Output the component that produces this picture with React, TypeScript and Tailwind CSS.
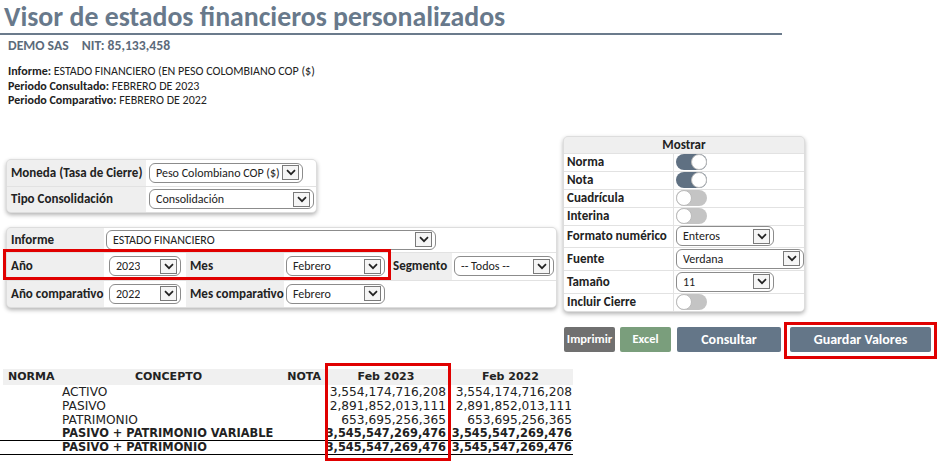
import React from "react";

function Chevron() {
  return (
    <svg width="10" height="7" viewBox="0 0 10 7" fill="none">
      <path d="M1 1.2 L5 5.2 L9 1.2" stroke="#222" strokeWidth="1.7" />
    </svg>
  );
}

function Select({ text, className = "" }: { text: string; className?: string }) {
  return (
    <div
      className={`flex h-[20px] items-center justify-between rounded-[6px] border border-[#8c8c8c] bg-white pl-[6px] pr-[3px] text-[12px] font-normal text-[#222] ${className}`}
    >
      <span className="truncate leading-none">{text}</span>
      <span className="flex h-[15px] w-[17px] shrink-0 items-center justify-center border border-[#7a7a7a] bg-[#f5f5f5]">
        <Chevron />
      </span>
    </div>
  );
}

function Toggle({ on }: { on?: boolean }) {
  return (
    <div
      className={`flex h-[16px] w-[31px] items-center rounded-full ${
        on ? "justify-end bg-[#5f7082]" : "justify-start bg-[#c4c4c4]"
      }`}
    >
      <div className="h-[16px] w-[16px] rounded-full border border-[#bbb] bg-white" />
    </div>
  );
}

const lbl = "flex items-center whitespace-nowrap bg-[#efefef] px-[4px] text-[13px] font-bold text-[#222]";
const cols = "grid grid-cols-[55px_227px_42px_124px_1fr]";

export default function App() {
  const rows = [
    { c: "ACTIVO", a: "3,554,174,716,208", b: "3,554,174,716,208" },
    { c: "PASIVO", a: "2,891,852,013,111", b: "2,891,852,013,111" },
    { c: "PATRIMONIO", a: "653,695,256,365", b: "653,695,256,365" },
  ];
  return (
    <div className="h-[466px] w-[941px] overflow-hidden bg-white font-['Calibri','Carlito','Lato',sans-serif] text-[#222]">
      {/* header */}
      <div className="w-[782px] border-b-2 border-[#6b7b8c] pl-[4px]">
        <h1 className="text-[27.8px] font-bold leading-[33px] text-[#68798b]">
          Visor de estados financieros personalizados
        </h1>
      </div>
      <div className="pl-[8px] pt-[2px] text-[13.7px] font-bold leading-[17px] text-[#5c6b7b]">
        DEMO SAS <span className="ml-[10px]">NIT: 85,133,458</span>
      </div>
      <div className="pl-[8px] pt-[10px] text-[12px] leading-[14.5px] text-[#222]">
        <div>
          <b>Informe:</b> ESTADO FINANCIERO (EN PESO COLOMBIANO COP ($)
        </div>
        <div>
          <b>Periodo Consultado:</b> FEBRERO DE 2023
        </div>
        <div>
          <b>Periodo Comparativo:</b> FEBRERO DE 2022
        </div>
      </div>

      {/* filters */}
      <div className="mt-[28px] flex items-start">
        <div className="ml-[6px] w-[557px] shrink-0 pt-[23px]">
          <div className="grid w-[311px] grid-cols-[139px_1fr] gap-y-px overflow-hidden rounded-[5px] border border-[#ddd] bg-[#e2e2e2] shadow-[0_2px_4px_rgba(0,0,0,0.3)]">
            <div className={`${lbl} h-[26px]`}>Moneda (Tasa de Cierre)</div>
            <div className="flex items-center bg-white pl-[3px]">
              <Select text="Peso Colombiano COP ($)" className="w-[154px]" />
            </div>
            <div className={`${lbl} h-[25px]`}>Tipo Consolidación</div>
            <div className="flex items-center bg-white pl-[3px]">
              <Select text="Consolidación" className="w-[165px]" />
            </div>
          </div>

          <div className="relative mt-[14px] w-[551px]">
            <div className="grid grid-cols-[97px_80px_100px_105px_63px_1fr] gap-y-px overflow-hidden rounded-[5px] border border-[#ddd] bg-[#e2e2e2] shadow-[0_2px_4px_rgba(0,0,0,0.3)]">
              <div className={`${lbl} h-[24px]`}>Informe</div>
              <div className="col-span-5 flex items-center bg-white pl-[2px]">
                <Select text="ESTADO FINANCIERO" className="w-[330px]" />
              </div>

              <div className={`${lbl} h-[27px]`}>Año</div>
              <div className="flex items-center bg-white pl-[5px]">
                <Select text="2023" className="w-[72px]" />
              </div>
              <div className={`${lbl} border-l-2 border-white px-[2px]`}>Mes</div>
              <div className="flex items-center bg-white pl-[2px]">
                <Select text="Febrero" className="w-[99px]" />
              </div>
              <div className={`${lbl} px-[2px]`}>Segmento</div>
              <div className="flex items-center bg-white pl-[2px]">
                <Select text="-- Todos --" className="w-[100px]" />
              </div>

              <div className={`${lbl} h-[26px]`}>Año comparativo</div>
              <div className="flex items-center bg-white pl-[5px]">
                <Select text="2022" className="w-[72px]" />
              </div>
              <div className={`${lbl} border-l-2 border-white px-[2px]`}>Mes comparativo</div>
              <div className="flex items-center bg-white pl-[2px]">
                <Select text="Febrero" className="w-[99px]" />
              </div>
              <div className="col-span-2 bg-white" />
            </div>
            <div className="pointer-events-none absolute left-[-3px] top-[22px] h-[31px] w-[388px] border-[3px] border-[#e00000]" />
          </div>
        </div>

        {/* Mostrar */}
        <div className="w-[242px] shrink-0">
          <div className="overflow-hidden rounded-[5px] border border-[#ddd] bg-[#e2e2e2] shadow-[0_2px_4px_rgba(0,0,0,0.3)]">
            <div className="flex h-[16px] items-center justify-center bg-[#efefef] text-[13px] font-bold">
              Mostrar
            </div>
            <div className="mt-px grid grid-cols-[109px_1fr] gap-px text-[13px] font-bold">
              <div className="flex h-[17px] items-center bg-white pl-[3px]">Norma</div>
              <div className="flex items-center bg-white pl-[2px]"><Toggle on /></div>
              <div className="flex h-[17px] items-center bg-white pl-[3px]">Nota</div>
              <div className="flex items-center bg-white pl-[2px]"><Toggle on /></div>
              <div className="flex h-[17px] items-center bg-white pl-[3px]">Cuadrícula</div>
              <div className="flex items-center bg-white pl-[2px]"><Toggle /></div>
              <div className="flex h-[17px] items-center bg-white pl-[3px]">Interina</div>
              <div className="flex items-center bg-white pl-[2px]"><Toggle /></div>
              <div className="flex h-[21px] items-center whitespace-nowrap bg-white pl-[3px]">Formato numérico</div>
              <div className="flex items-center bg-white pl-[2px]"><Select text="Enteros" className="w-[98px]" /></div>
              <div className="flex h-[22px] items-center bg-white pl-[3px]">Fuente</div>
              <div className="flex items-center bg-white pl-[2px]"><Select text="Verdana" className="w-[128px]" /></div>
              <div className="flex h-[22px] items-center bg-white pl-[3px]">Tamaño</div>
              <div className="flex items-center bg-white pl-[2px]"><Select text="11" className="w-[98px]" /></div>
              <div className="flex h-[17px] items-center bg-white pl-[3px]">Incluir Cierre</div>
              <div className="flex items-center bg-white pl-[2px]"><Toggle /></div>
            </div>
          </div>

          <div className="mt-[15px] flex w-[380px] items-center text-[12.5px] font-bold text-white">
            <div className="ml-px flex h-[25px] w-[51px] shrink-0 items-center justify-center rounded-[2px] bg-[#707070]">Imprimir</div>
            <div className="ml-[5px] flex h-[25px] w-[51px] shrink-0 items-center justify-center rounded-[2px] bg-[#7a9e7c]">Excel</div>
            <div className="ml-[6px] flex h-[25px] w-[104px] shrink-0 items-center justify-center rounded-[2px] bg-[#647688] text-[14px]">Consultar</div>
            <div className="relative ml-[9px] flex h-[25px] w-[141px] shrink-0 items-center justify-center whitespace-nowrap rounded-[2px] bg-[#647688] text-[14px]">
              Guardar Valores
              <div className="pointer-events-none absolute left-[-6px] top-[-5px] h-[37px] w-[153px] border-[3px] border-[#e00000]" />
            </div>
          </div>
        </div>
      </div>

      {/* table */}
      <div className="relative mt-[17px] w-[573px] font-['Verdana','DejaVu_Sans',sans-serif] text-[12.2px] leading-none">
        <div className="ml-[3px] grid h-[16px] grid-cols-[52px_227px_42px_124px_1fr] items-center bg-[#f0f0f0] text-[11px] font-bold">
          <div className="pl-[5px]">NORMA</div>
          <div className="text-center">CONCEPTO</div>
          <div className="pr-[3px] text-right">NOTA</div>
          <div className="text-center">Feb 2023</div>
          <div className="text-center">Feb 2022</div>
        </div>
        {rows.map((r) => (
          <div key={r.c} className={`${cols} h-[14px] items-end`}>
            <div />
            <div className="pl-[7px]">{r.c}</div>
            <div />
            <div className="pr-[2px] text-right">{r.a}</div>
            <div className="pr-[1px] text-right">{r.b}</div>
          </div>
        ))}
        <div className={`${cols} h-[14px] items-end border-b border-black text-[11.4px] font-bold`}>
          <div />
          <div className="whitespace-nowrap pl-[7px]">PASIVO + PATRIMONIO VARIABLE</div>
          <div />
          <div className="pr-[2px] text-right">3,545,547,269,476</div>
          <div className="pr-[1px] text-right">3,545,547,269,476</div>
        </div>
        <div className={`${cols} h-[14px] items-end border-b border-black text-[11.4px] font-bold`}>
          <div />
          <div className="pl-[7px]">PASIVO + PATRIMONIO</div>
          <div />
          <div className="pr-[2px] text-right">3,545,547,269,476</div>
          <div className="pr-[1px] text-right">3,545,547,269,476</div>
        </div>
        <div className="pointer-events-none absolute left-[325px] top-[-6px] h-[98px] w-[126px] border-[3px] border-[#e00000]" />
      </div>
    </div>
  );
}
